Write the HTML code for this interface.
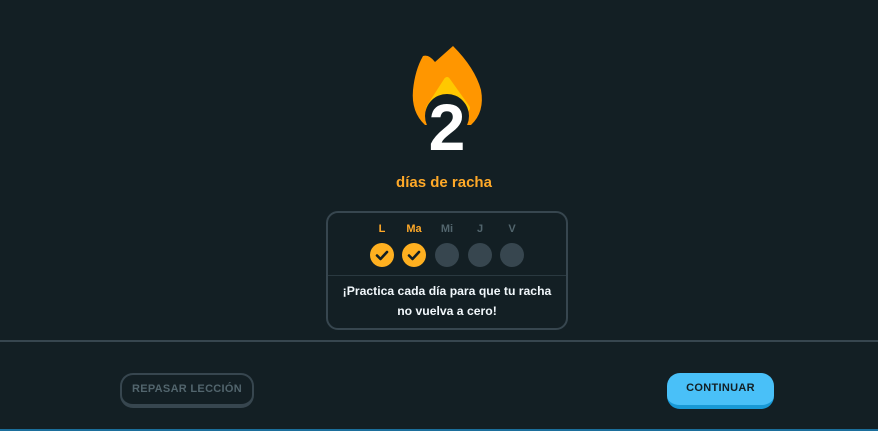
<!DOCTYPE html>
<html><head><meta charset="utf-8"><style>
*{margin:0;padding:0;box-sizing:border-box}
body{width:878px;height:431px;background:#131f24;font-family:"Liberation Sans",sans-serif;position:relative;overflow:hidden}
.sep{position:absolute;left:0;top:340px;width:878px;height:2px;background:#37464f}
.bot{position:absolute;left:0;top:429px;width:878px;height:2px;background:#1b6f9c}
.num{position:absolute;left:397px;top:92px;width:100px;text-align:center;color:#fff;font-weight:bold;font-size:66px;line-height:70px}
.lbl{position:absolute;left:0;width:878px;top:174px;text-align:center;color:#ffa928;font-weight:bold;font-size:15px;padding-left:10px}
.card{position:absolute;left:326px;top:211px;width:242px;height:119px;border:2px solid #37464f;border-radius:12px}
.days{position:absolute;top:10px;left:0;width:100%}
.d{position:absolute;width:24px;text-align:center;font-size:11px;font-weight:bold;color:#52656d}
.c{position:absolute;top:20px;width:24px;height:24px;border-radius:50%;background:#37464f}
.c.on{background:#ffb020}
.div{position:absolute;left:0;top:62px;width:100%;height:1px;background:#2a3940}
.msg{position:absolute;top:68px;left:0;width:100%;text-align:center;color:#f1f7fb;font-size:12.2px;font-weight:bold;line-height:20px}
.b1{position:absolute;left:120px;top:373px;width:134px;height:35px;border:2px solid #37464f;border-bottom-width:4px;border-radius:13px;color:#52656d;font-size:11px;font-weight:bold;text-align:center;line-height:28px;letter-spacing:.3px}
.b2{position:absolute;left:667px;top:373px;width:107px;height:36px;background:#49c0f8;border-bottom:4px solid #1899d6;border-radius:13px;color:#131f24;font-size:11px;font-weight:bold;text-align:center;line-height:31px;letter-spacing:.3px}
</style></head><body>
<svg style="position:absolute;left:405px;top:40px" width="85" height="100" viewBox="0 0 85 100">
<path d="M18 16 Q24 14 30 22 L48 6 Q70 28 76 50 Q80 72 66 85 L20 85 Q6 72 8 50 Q10 30 18 16Z" fill="#ff9600"/>
<path d="M42 40 L62 68 L24 68 Z" fill="#ffc800" stroke="#ffc800" stroke-width="6" stroke-linejoin="round"/>
<circle cx="42" cy="76" r="22" fill="#131f24"/>
</svg>
<div class="num">2</div>
<div class="lbl">días de racha</div>
<div class="card">
<div class="days">
<div class="d" style="left:42px;color:#ffa928">L</div>
<div class="d" style="left:74px;color:#ffa928">Ma</div>
<div class="d" style="left:107px">Mi</div>
<div class="d" style="left:140px">J</div>
<div class="d" style="left:172px">V</div>
<div class="c on" style="left:42px"><svg width="24" height="24"><path d="M7 12.5l3.5 3.5 6.5-7" stroke="#131f24" stroke-width="2.6" fill="none" stroke-linecap="round" stroke-linejoin="round"/></svg></div>
<div class="c on" style="left:74px"><svg width="24" height="24"><path d="M7 12.5l3.5 3.5 6.5-7" stroke="#131f24" stroke-width="2.6" fill="none" stroke-linecap="round" stroke-linejoin="round"/></svg></div>
<div class="c" style="left:107px"></div>
<div class="c" style="left:140px"></div>
<div class="c" style="left:172px"></div>
</div>
<div class="div"></div>
<div class="msg">¡Practica cada día para que tu racha<br>no vuelva a cero!</div>
</div>
<div class="sep"></div>
<div class="b1">REPASAR LECCIÓN</div>
<div class="b2">CONTINUAR</div>
<div class="bot"></div>
</body></html>
